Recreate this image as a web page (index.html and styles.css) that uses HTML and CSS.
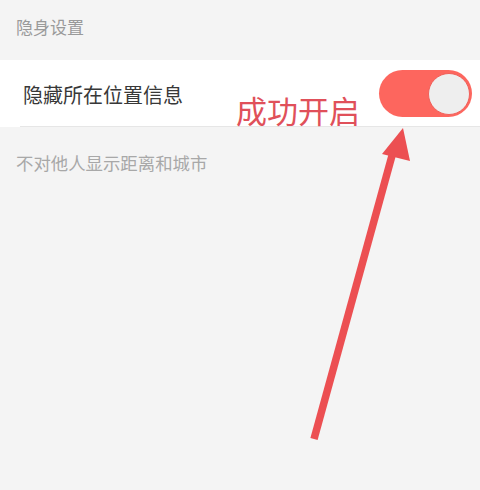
FILE: index.html
```html
<html>
<head>
    <meta charset="utf-8">
    <title>隐身设置</title>
    <link rel="stylesheet" href="styles.css">
</head>
<body>
    <div class="page">
        <div class="section_title">隐身设置</div>
        <div class="cell">
            <span class="cell_label">隐藏所在位置信息</span>
            <div class="switch on"><span class="knob"></span></div>
        </div>
        <div class="section_tip">不对他人显示距离和城市</div>

        <div class="note">成功开启</div>
        <svg class="arrow" width="480" height="490" viewBox="0 0 480 490">
            <line x1="314" y1="439" x2="393" y2="152" stroke="#ec4f52" stroke-width="7.5"/>
            <polygon points="403,128 410,161 382,154" fill="#ec4f52"/>
        </svg>
    </div>
</body>
</html>
```
FILE: styles.css
```css
body {
    margin: 0;
    background: #f4f4f4;
    font-family: "Noto Sans CJK SC", "Noto Sans", sans-serif;
}
.page {
    position: relative;
    width: 480px;
    height: 490px;
    overflow: hidden;
}
.section_title {
    height: 60px;
    box-sizing: border-box;
    padding: 14px 0 0 16px;
    font-size: 17px;
    line-height: 26px;
    color: #9a9a9a;
}
.cell {
    position: relative;
    height: 67px;
    background: #fff;
    display: flex;
    align-items: center;
    justify-content: space-between;
    padding: 0 8px 0 23px;
}
.cell::after {
    content: "";
    position: absolute;
    left: 20px;
    right: 0;
    bottom: 0;
    height: 1px;
    background: #e6e6e6;
}
.cell_label {
    font-size: 20px;
    color: #383838;
    line-height: 28px;
    margin-top: 2px;
}
.switch {
    width: 93px;
    height: 47px;
    border-radius: 24px;
    background: #ddd;
    display: flex;
    align-items: center;
    justify-content: flex-start;
    padding: 0 2px;
    box-sizing: border-box;
}
.switch.on {
    background: #fd665e;
    justify-content: flex-end;
}
.knob {
    width: 42px;
    height: 42px;
    border-radius: 50%;
    background: #eeeeee;
    border: 1px solid #f0605a;
    box-sizing: border-box;
}
.section_tip {
    padding: 23px 0 0 16px;
    font-size: 17.4px;
    line-height: 26px;
    color: #a8a8a8;
}
.note {
    position: absolute;
    left: 236px;
    top: 91px;
    font-size: 31px;
    line-height: 38px;
    color: #e0505a;
}
.arrow {
    position: absolute;
    left: 0;
    top: 0;
}
```
